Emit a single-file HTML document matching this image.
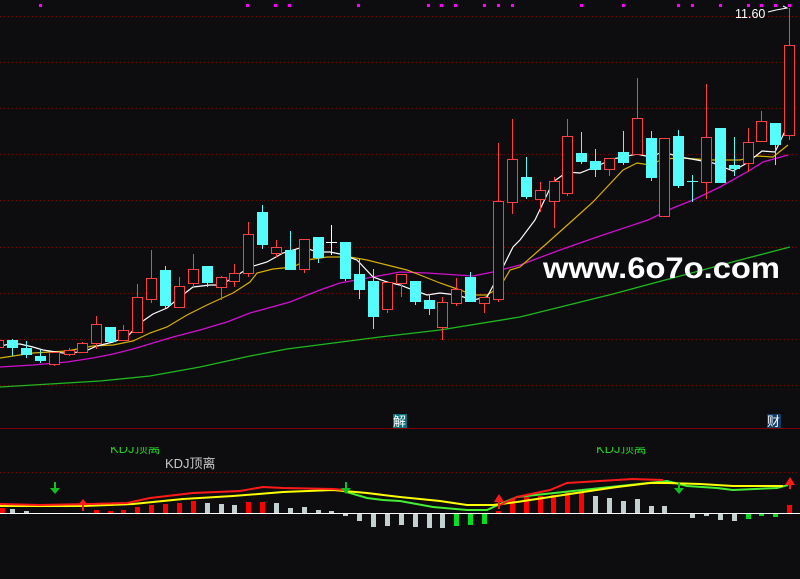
<!DOCTYPE html>
<html><head><meta charset="utf-8"><style>
html,body{margin:0;padding:0;background:#0d0d10;}
svg{display:block}
</style></head><body>
<svg width="800" height="579" viewBox="0 0 800 579" xmlns="http://www.w3.org/2000/svg">
<rect width="800" height="579" fill="#0d0d10"/>
<g stroke="#800000" stroke-width="1" stroke-dasharray="1,3" shape-rendering="crispEdges">
<line x1="0" y1="16.5" x2="800" y2="16.5"/><line x1="0" y1="62.5" x2="800" y2="62.5"/>
<line x1="0" y1="108.5" x2="800" y2="108.5"/><line x1="0" y1="154.5" x2="800" y2="154.5"/>
<line x1="0" y1="200.5" x2="800" y2="200.5"/><line x1="0" y1="247.5" x2="800" y2="247.5"/>
<line x1="0" y1="293.5" x2="800" y2="293.5"/><line x1="0" y1="339.5" x2="800" y2="339.5"/>
<line x1="0" y1="385.5" x2="800" y2="385.5"/><line x1="0" y1="472.5" x2="800" y2="472.5"/>
</g>
<line x1="0" y1="428.5" x2="800" y2="428.5" stroke="#7a0000" stroke-width="1"/>
<g fill="#ff00ff">
<rect x="39" y="4" width="3" height="3"/><rect x="246" y="4" width="3" height="3"/><rect x="274" y="4" width="3" height="3"/><rect x="288" y="4" width="3" height="3"/><rect x="357" y="4" width="3" height="3"/><rect x="427" y="4" width="3" height="3"/><rect x="440" y="4" width="3" height="3"/><rect x="454" y="4" width="3" height="3"/><rect x="483" y="4" width="3" height="3"/><rect x="497" y="4" width="3" height="3"/><rect x="511" y="4" width="3" height="3"/><rect x="580" y="4" width="3" height="3"/><rect x="622" y="4" width="3" height="3"/><rect x="677" y="4" width="3" height="3"/><rect x="691" y="4" width="3" height="3"/><rect x="719" y="4" width="3" height="3"/><rect x="747" y="4" width="3" height="3"/><rect x="760" y="4" width="3" height="3"/><rect x="774" y="4" width="3" height="3"/><rect x="788" y="4" width="3" height="3"/>
</g>
<polyline fill="none" stroke="#1fb81f" stroke-width="1.3" points="0,387 50,384 100,381 150,376 200,367 250,356 287,349 380,337 440,330 520,317 613,294 740,260 790,247"/>
<polyline fill="none" stroke="#d010d0" stroke-width="1.3" points="0,367 33,365 67,362 93,358 113,354 133,349 153,343 173,337 200,330 227,322 250,313 290,302 320,290 340,283 373,277 400,272 427,273 473,276 493,272 520,265 560,250 600,236 648,220 673,208 693,200 720,187 747,172 763,162 788,155"/>
<polyline fill="none" stroke="#d8b000" stroke-width="1.2" points="0,358 33,353 67,351 93,346 113,345 133,341 150,333 167,327 187,315 207,305 233,293 250,282 257,273 273,269 293,267 307,260 327,257 350,257 367,260 387,265 407,270 420,275 440,283 460,290 473,295 487,295 500,287 510,270 520,267 545,245 573,220 593,202 623,170 637,163 650,165 663,159 680,158 713,160 740,160 757,156 773,157 788,145"/>
<polyline fill="none" stroke="#ffffff" stroke-width="1.2" points="0,346 10,344 20,344 33,347 43,350 63,353 83,352 97,346 113,342 127,337 140,323 153,314 167,308 180,297 193,287 210,285 220,285 233,278 250,267 267,262 283,253 303,247 317,252 330,252 340,254 357,260 373,277 387,282 400,285 413,290 427,295 440,293 457,295 473,300 487,297 500,273 513,247 520,240 535,220 553,182 567,172 580,173 595,167 613,159 637,154 650,157 663,152 680,157 697,160 713,163 733,171 747,163 762,151 775,152 788,125"/>
<g shape-rendering="crispEdges" stroke-width="1">
<g stroke="#ff4040" fill="#0d0d10">
<rect x="-6.5" y="340.5" width="10" height="7"/>
<line x1="54.5" y1="352" x2="54.5" y2="366"/><rect x="49.5" y="352.5" width="10" height="12"/>
<line x1="69.5" y1="348" x2="69.5" y2="356"/><rect x="64.5" y="350.5" width="10" height="4"/>
<line x1="82.5" y1="342" x2="82.5" y2="353"/><rect x="77.5" y="343.5" width="10" height="9"/>
<line x1="96.5" y1="316" x2="96.5" y2="349"/><rect x="91.5" y="324.5" width="10" height="19"/>
<line x1="123.5" y1="325" x2="123.5" y2="340"/><rect x="118.5" y="330.5" width="10" height="10"/>
<line x1="137.5" y1="284" x2="137.5" y2="332"/><rect x="132.5" y="297.5" width="10" height="35"/>
<line x1="151.5" y1="250" x2="151.5" y2="303"/><rect x="146.5" y="278.5" width="10" height="21"/>
<line x1="179.5" y1="277" x2="179.5" y2="308"/><rect x="174.5" y="286.5" width="10" height="21"/>
<line x1="193.5" y1="254" x2="193.5" y2="287"/><rect x="188.5" y="269.5" width="10" height="14"/>
<line x1="221.5" y1="276" x2="221.5" y2="300"/><rect x="216.5" y="277.5" width="10" height="10"/>
<line x1="234.5" y1="264" x2="234.5" y2="287"/><rect x="229.5" y="273.5" width="10" height="8"/>
<line x1="248.5" y1="222" x2="248.5" y2="277"/><rect x="243.5" y="234.5" width="10" height="39"/>
<line x1="276.5" y1="240" x2="276.5" y2="257"/><rect x="271.5" y="247.5" width="10" height="6"/>
<line x1="304.5" y1="239" x2="304.5" y2="273"/><rect x="299.5" y="239.5" width="10" height="30"/>
<line x1="387.5" y1="282" x2="387.5" y2="313"/><rect x="382.5" y="282.5" width="10" height="27"/>
<line x1="401.5" y1="274" x2="401.5" y2="297"/><rect x="396.5" y="274.5" width="10" height="9"/>
<line x1="442.5" y1="297" x2="442.5" y2="340"/><rect x="437.5" y="302.5" width="10" height="25"/>
<line x1="456.5" y1="278" x2="456.5" y2="306"/><rect x="451.5" y="289.5" width="10" height="14"/>
<line x1="484.5" y1="297" x2="484.5" y2="313"/><rect x="479.5" y="297.5" width="10" height="6"/>
<line x1="498.5" y1="143" x2="498.5" y2="302"/><rect x="493.5" y="201.5" width="10" height="98"/>
<line x1="512.5" y1="119" x2="512.5" y2="214"/><rect x="507.5" y="159.5" width="10" height="43"/>
<line x1="540.5" y1="182" x2="540.5" y2="212"/><rect x="535.5" y="190.5" width="10" height="9"/>
<line x1="554.5" y1="177" x2="554.5" y2="228"/><rect x="549.5" y="181.5" width="10" height="20"/>
<line x1="567.5" y1="119" x2="567.5" y2="196"/><rect x="562.5" y="136.5" width="10" height="57"/>
<line x1="609.5" y1="158" x2="609.5" y2="176"/><rect x="604.5" y="158.5" width="10" height="11"/>
<line x1="637.5" y1="78" x2="637.5" y2="154"/><rect x="632.5" y="118.5" width="10" height="36"/>
<rect x="659.5" y="138.5" width="10" height="78"/>
<line x1="706.5" y1="84" x2="706.5" y2="199"/><rect x="701.5" y="137.5" width="10" height="45"/>
<line x1="748.5" y1="128" x2="748.5" y2="172"/><rect x="743.5" y="142.5" width="10" height="21"/>
<line x1="761.5" y1="111" x2="761.5" y2="141"/><rect x="756.5" y="121.5" width="10" height="20"/>
<line x1="789.5" y1="8" x2="789.5" y2="140"/><rect x="784.5" y="45.5" width="10" height="90"/>
</g>
<g stroke="#54fcfc" fill="#54fcfc">
<line x1="12.5" y1="339" x2="12.5" y2="356"/><rect x="7.5" y="340.5" width="10" height="7"/>
<line x1="26.5" y1="341" x2="26.5" y2="358"/><rect x="21.5" y="348.5" width="10" height="6"/>
<line x1="40.5" y1="350" x2="40.5" y2="363"/><rect x="35.5" y="356.5" width="10" height="4"/>
<rect x="105.5" y="327.5" width="10" height="14"/>
<line x1="165.5" y1="266" x2="165.5" y2="308"/><rect x="160.5" y="270.5" width="10" height="35"/>
<line x1="207.5" y1="266" x2="207.5" y2="287"/><rect x="202.5" y="266.5" width="10" height="16"/>
<line x1="262.5" y1="205" x2="262.5" y2="249"/><rect x="257.5" y="212.5" width="10" height="32"/>
<line x1="290.5" y1="231" x2="290.5" y2="269"/><rect x="285.5" y="250.5" width="10" height="19"/>
<line x1="318.5" y1="237" x2="318.5" y2="263"/><rect x="313.5" y="237.5" width="10" height="20"/>
<line x1="345.5" y1="242" x2="345.5" y2="281"/><rect x="340.5" y="242.5" width="10" height="36"/>
<line x1="359.5" y1="259" x2="359.5" y2="299"/><rect x="354.5" y="274.5" width="10" height="15"/>
<line x1="373.5" y1="269" x2="373.5" y2="329"/><rect x="368.5" y="281.5" width="10" height="35"/>
<line x1="415.5" y1="281" x2="415.5" y2="305"/><rect x="410.5" y="281.5" width="10" height="20"/>
<line x1="429.5" y1="294" x2="429.5" y2="315"/><rect x="424.5" y="300.5" width="10" height="8"/>
<line x1="470.5" y1="272" x2="470.5" y2="301"/><rect x="465.5" y="277.5" width="10" height="24"/>
<line x1="526.5" y1="157" x2="526.5" y2="199"/><rect x="521.5" y="177.5" width="10" height="19"/>
<line x1="581.5" y1="132" x2="581.5" y2="164"/><rect x="576.5" y="153.5" width="10" height="8"/>
<line x1="595.5" y1="149" x2="595.5" y2="177"/><rect x="590.5" y="161.5" width="10" height="8"/>
<line x1="623.5" y1="131" x2="623.5" y2="165"/><rect x="618.5" y="152.5" width="10" height="10"/>
<line x1="651.5" y1="131" x2="651.5" y2="181"/><rect x="646.5" y="138.5" width="10" height="39"/>
<line x1="678.5" y1="130" x2="678.5" y2="188"/><rect x="673.5" y="136.5" width="10" height="49"/>
<line x1="692.5" y1="175" x2="692.5" y2="202"/><line x1="687" y1="181.5" x2="698" y2="181.5"/>
<rect x="715.5" y="128.5" width="10" height="54"/>
<line x1="734.5" y1="137" x2="734.5" y2="176"/><rect x="729.5" y="165.5" width="10" height="3"/>
<line x1="775.5" y1="123" x2="775.5" y2="165"/><rect x="770.5" y="123.5" width="10" height="21"/>
</g>
<g stroke="#ffffff"><line x1="331.5" y1="225" x2="331.5" y2="255"/><line x1="326" y1="242.5" x2="337" y2="242.5"/></g>
</g>
<text x="735" y="18" fill="#ffffff" font-family="Liberation Sans, sans-serif" font-size="12.5">11.60</text>
<polyline fill="none" stroke="#ffffff" stroke-width="1" points="768,12 776,10 787,8 783,6"/>
<text x="543" y="278" fill="#ffffff" font-family="Liberation Sans, sans-serif" font-weight="bold" font-size="30" textLength="237" lengthAdjust="spacingAndGlyphs">www.6o7o.com</text>
<rect x="393" y="414" width="14" height="14" fill="#0a6f7a"/>
<text x="393" y="426" fill="#ffffff" font-family="'Liberation Sans','Noto Sans CJK SC',sans-serif" font-size="13">解</text>
<rect x="767" y="414" width="14" height="14" fill="#123c6a"/>
<text x="767" y="426" fill="#ffffff" font-family="'Liberation Sans','Noto Sans CJK SC',sans-serif" font-size="13">财</text>
<clipPath id="cp"><rect x="0" y="447" width="800" height="10"/></clipPath>
<g clip-path="url(#cp)" fill="#22cc22" font-family="'Liberation Sans','Noto Sans CJK SC',sans-serif" font-size="13">
<text x="110" y="453">KDJ顶离</text><text x="596" y="453">KDJ顶离</text>
</g>
<text x="165" y="468" fill="#c8c8c8" font-family="'Liberation Sans','Noto Sans CJK SC',sans-serif" font-size="13">KDJ顶离</text>
<g shape-rendering="crispEdges">
<g fill="#ff0000">
<rect x="0" y="508" width="5" height="5"/><rect x="94" y="510" width="5" height="3"/><rect x="108" y="511" width="5" height="2"/><rect x="121" y="510" width="5" height="3"/><rect x="135" y="507" width="5" height="6"/><rect x="149" y="505" width="5" height="8"/><rect x="163" y="504" width="5" height="9"/><rect x="177" y="503" width="5" height="10"/><rect x="191" y="501" width="5" height="12"/><rect x="246" y="502" width="5" height="11"/><rect x="260" y="502" width="5" height="11"/>
<rect x="496" y="511" width="5" height="2"/><rect x="510" y="499" width="5" height="14"/><rect x="524" y="497" width="5" height="16"/><rect x="538" y="496" width="5" height="17"/><rect x="551" y="495" width="5" height="18"/><rect x="565" y="491" width="5" height="22"/><rect x="579" y="493" width="5" height="20"/><rect x="787" y="505" width="5" height="8"/>
</g>
<g fill="#c4d0d0">
<rect x="10" y="509" width="5" height="4"/><rect x="24" y="511" width="5" height="2"/><rect x="205" y="503" width="5" height="10"/><rect x="219" y="504" width="5" height="9"/><rect x="232" y="505" width="5" height="8"/><rect x="274" y="503" width="5" height="10"/><rect x="288" y="508" width="5" height="5"/><rect x="302" y="507" width="5" height="6"/><rect x="316" y="510" width="5" height="3"/><rect x="329" y="511" width="5" height="2"/>
<rect x="343" y="513" width="5" height="3"/><rect x="357" y="513" width="5" height="8"/><rect x="371" y="513" width="5" height="14"/><rect x="385" y="513" width="5" height="13"/><rect x="399" y="513" width="5" height="12"/><rect x="413" y="513" width="5" height="14"/><rect x="427" y="513" width="5" height="15"/><rect x="440" y="513" width="5" height="15"/>
<rect x="593" y="496" width="5" height="17"/><rect x="607" y="498" width="5" height="15"/><rect x="621" y="501" width="5" height="12"/><rect x="635" y="499" width="5" height="14"/><rect x="649" y="506" width="5" height="7"/><rect x="662" y="506" width="5" height="7"/>
<rect x="690" y="513" width="5" height="5"/><rect x="704" y="513" width="5" height="3"/><rect x="718" y="513" width="5" height="7"/><rect x="732" y="513" width="5" height="8"/>
</g>
<g fill="#00e020">
<rect x="454" y="513" width="5" height="13"/><rect x="468" y="513" width="5" height="12"/><rect x="482" y="513" width="5" height="11"/><rect x="746" y="513" width="5" height="6"/><rect x="759" y="513" width="5" height="3"/><rect x="773" y="513" width="5" height="4"/>
</g>
<rect x="0" y="513" width="800" height="1" fill="#ffffff"/>
</g>
<polyline fill="none" stroke="#44ee33" stroke-width="2" points="340,490 367,498 383,500 400,501 433,507 467,510 487,510 500,504 517,497 667,481 687,486 717,488 733,490 777,488 788,485"/>
<polyline fill="none" stroke="#ffff00" stroke-width="2" points="0,506 83,506 133,504 183,499 233,496 283,492 333,490 367,493 400,497 440,501 467,505 493,505 517,502 550,497 583,492 617,487 650,483 667,483 700,484 733,486 783,486"/>
<polyline fill="none" stroke="#ff1a1a" stroke-width="2" points="0,504 40,505 90,504 127,503 150,498 193,493 240,491 263,487 283,488 333,489 345,490"/>
<polyline fill="none" stroke="#ff1a1a" stroke-width="2" points="500,505 517,497 550,490 567,483 600,481 633,479 663,480"/>
<g fill="#10c020">
<rect x="54" y="482" width="2" height="7"/><polygon points="50,488 60,488 55,494"/>
<rect x="345" y="482" width="2" height="7"/><polygon points="341,488 351,488 346,494"/>
<rect x="678" y="482" width="2" height="7"/><polygon points="674,488 684,488 679,494"/>
</g>
<g fill="#ff1a1a">
<polygon points="78,505 88,505 83,499"/><rect x="82" y="504" width="2" height="7"/>
<polygon points="494,502 504,502 499,494"/><rect x="498" y="501" width="2" height="8"/>
<polygon points="785,485 795,485 790,477"/><rect x="789" y="484" width="2" height="5"/>
</g>
</svg>
</body></html>
